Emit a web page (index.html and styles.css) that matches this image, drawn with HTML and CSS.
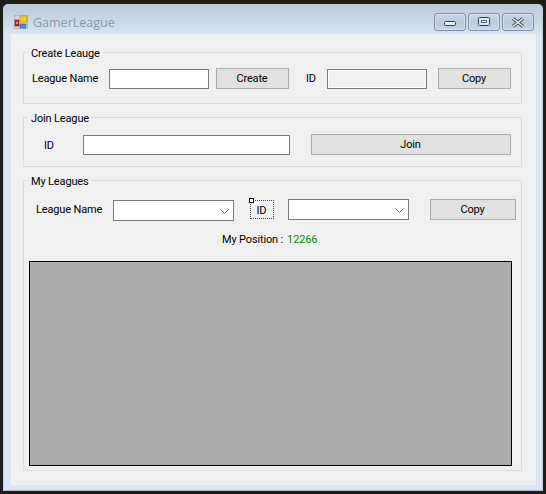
FILE: index.html
```html
<!DOCTYPE html>
<html lang="en">
<head>
<meta charset="utf-8">
<title>GamerLeague</title>
<link rel="stylesheet" href="styles.css">
</head>
<body>
<div class="window">
  <header class="titlebar">
    <svg class="app-icon" width="14" height="14" viewBox="0 0 14 14">
      <rect x="0.5" y="0.5" width="13" height="13" fill="#d4d8dc" stroke="#b4b8bc"/>
      <rect x="1" y="5" width="4" height="6" fill="#c8201c" stroke="#7a1a18" stroke-width="0.6"/>
      <rect x="2.3" y="6.8" width="1.4" height="2" fill="#f0d0c0"/>
      <rect x="6" y="1" width="7" height="6" fill="#f8c820" stroke="#b08a10" stroke-width="0.6"/>
      <rect x="6" y="9" width="6" height="4" fill="#4c8ee0" stroke="#2c60b0" stroke-width="0.6"/>
    </svg>
    <span class="title">GamerLeague</span>
    <div class="controls">
      <div class="ctl">
        <svg class="min-glyph" width="12" height="6" viewBox="0 0 12 6"><rect x="0.5" y="0.5" width="11" height="4" rx="1" fill="#e8eef4" stroke="#34404e" stroke-width="1"/></svg>
      </div>
      <div class="ctl">
        <svg width="12" height="10" viewBox="0 0 12 10"><rect x="0.5" y="0.5" width="11" height="8" rx="1" fill="#dfe7ef" stroke="#34404e"/><rect x="3.5" y="3.5" width="5" height="2" fill="#f4f6f8" stroke="#34404e" stroke-width="0.8"/></svg>
      </div>
      <div class="ctl">
        <svg width="14" height="11" viewBox="0 0 14 11"><path d="M2 1.5 L12 9.5 M12 1.5 L2 9.5" stroke="#39454f" stroke-width="3.4" fill="none"/><path d="M2 1.5 L12 9.5 M12 1.5 L2 9.5" stroke="#f2f5f8" stroke-width="1.6" fill="none"/></svg>
      </div>
    </div>
  </header>
  <main class="client">
    <section class="group group-create">
      <h2 class="legend">Create Leauge</h2>
      <div class="row row-create">
        <label class="lbl lbl-name">League Name</label>
        <div class="input input-100"></div>
        <div class="btn btn-create">Create</div>
        <label class="lbl lbl-id">ID</label>
        <div class="input input-100 input-off"></div>
        <div class="btn btn-copy1">Copy</div>
      </div>
    </section>
    <section class="group group-join">
      <h2 class="legend">Join League</h2>
      <div class="row row-join">
        <label class="lbl lbl-id2">ID</label>
        <div class="input input-207"></div>
        <div class="btn btn-join">Join</div>
      </div>
    </section>
    <section class="group group-my">
      <h2 class="legend">My Leagues</h2>
      <div class="row row-my">
        <label class="lbl lbl-name2">League Name</label>
        <div class="combo combo-a">
          <svg width="9" height="5" viewBox="0 0 9 5"><path d="M0.5 0.5 L4.5 4.5 L8.5 0.5" fill="none" stroke="#666" stroke-width="1"/></svg>
        </div>
        <div class="selected">ID<span class="handle"></span></div>
        <div class="combo combo-b">
          <svg width="9" height="5" viewBox="0 0 9 5"><path d="M0.5 0.5 L4.5 4.5 L8.5 0.5" fill="none" stroke="#666" stroke-width="1"/></svg>
        </div>
        <div class="btn btn-copy2">Copy</div>
      </div>
      <div class="position">My Position :<span class="score">12266</span></div>
      <div class="panel"></div>
    </section>
  </main>
</div>
</body>
</html>
```
FILE: styles.css
```css
* { box-sizing: border-box; }
html, body { margin: 0; height: 100%; }
body {
  width: 546px;
  height: 494px;
  overflow: hidden;
  background: #1c1c1c;
  padding: 4px 3px 3px 3px;
  font-family: "Roboto", "Open Sans", "Liberation Sans", sans-serif;
  font-size: 11px;
  letter-spacing: -0.15px;
  color: #000;
}
.window {
  height: 487px;
  border: 1px solid #c9ced3;
  border-bottom-color: #b8bdc2;
  border-radius: 5px 5px 0 0;
  background: #dae6f3;
  padding: 0 6px 6px 7px;
  display: flex;
  flex-direction: column;
}
.titlebar {
  height: 29px;
  flex: none;
  margin: 0 -6px 0 -7px;
  padding: 0 8px 0 10px;
  border-radius: 4px 4px 0 0;
  background: linear-gradient(#bbcbdb, #d6e4f2);
  display: flex;
  align-items: flex-start;
}
.app-icon { margin-top: 10px; }
.title {
  margin: 9px 0 0 5px;
  font-family: "Open Sans", sans-serif;
  font-size: 12.5px;
  letter-spacing: 0;
  line-height: 18px;
  color: #8d98a3;
}
.controls { margin-left: auto; margin-top: 8px; display: flex; gap: 2px; }
.ctl {
  width: 32px;
  height: 18px;
  border: 1px solid #7e90a6;
  border-radius: 3px;
  background: linear-gradient(#c9d6e4, #bccbdb 50%, #c6d4e2);
  box-shadow: inset 0 0 0 1px rgba(255,255,255,.35);
  display: flex;
  align-items: center;
  justify-content: center;
}
.min-glyph { margin-top: 4px; }
.client {
  flex: 1;
  background: #f0f0f0;
  padding: 18px 14px 14px 12px;
}
.group {
  position: relative;
  border: 1px solid #dcdcdc;
  margin-bottom: 13px;
}
.group-create { height: 52px; padding: 15px 0 0 8px; }
.group-join { height: 50px; padding: 16px 0 0 20px; }
.group-my { height: 291px; margin-bottom: 0; padding: 18px 0 0 5px; }
.legend {
  position: absolute;
  top: -7px;
  left: 4px;
  margin: 0;
  padding: 0 3px;
  background: #f0f0f0;
  font: inherit;
  line-height: 16px;
}
.row { display: flex; align-items: flex-start; }
.lbl { line-height: 16px; white-space: nowrap; }
.input {
  height: 20px;
  background: #fff;
  border: 1px solid #7a7a7a;
}
.input-100 { width: 100px; }
.input-207 { width: 207px; }
.input-off { background: #f0f0f0; box-shadow: inset 0 0 0 1px #fff; }
.btn {
  height: 21px;
  border: 1px solid #adadad;
  background: #e1e1e1;
  display: flex;
  align-items: center;
  justify-content: center;
  padding: 1px 1px 0 0;
  line-height: 16px;
}
.row-create .input { margin-top: 1px; }
.row-create .lbl { margin-top: 3px; }
.lbl-name { width: 77px; }
.btn-create { width: 73px; margin-left: 7px; }
.lbl-id { width: 21px; margin-left: 17px; }
.btn-copy1 { width: 73px; margin-left: 11px; }
.row-join .input { margin-top: 1px; }
.row-join .lbl { margin-top: 4px; }
.lbl-id2 { width: 39px; }
.btn-join { width: 200px; margin-left: 21px; }
.row-my .lbl { margin-top: 3px; }
.lbl-name2 { width: 77px; margin-left: 7px; }
.combo {
  width: 121px;
  height: 21px;
  background: #fff;
  border: 1px solid #7a7a7a;
  display: flex;
  align-items: center;
  justify-content: flex-end;
  padding: 1px 4px 0 0;
}
.combo-a { margin-top: 1px; }
.selected {
  position: relative;
  width: 24px;
  height: 19px;
  margin: 1px 0 0 16px;
  padding: 1px 1px 0 0;
  border: 1px dotted #444;
  display: flex;
  align-items: center;
  justify-content: center;
}
.handle {
  position: absolute;
  left: -2px;
  top: -3px;
  width: 5px;
  height: 5px;
  background: #fff;
  border: 1px solid #000;
}
.combo-b { margin-left: 14px; }
.btn-copy2 { width: 86px; margin-left: 21px; }
.position {
  margin: 10px 0 0 193px;
  line-height: 18px;
  white-space: nowrap;
}
.score { margin-left: 4px; color: #078c07; }
.panel {
  width: 483px;
  height: 205px;
  margin-top: 12px;
  background: #ababab;
  border: 1px solid #000;
}
```
